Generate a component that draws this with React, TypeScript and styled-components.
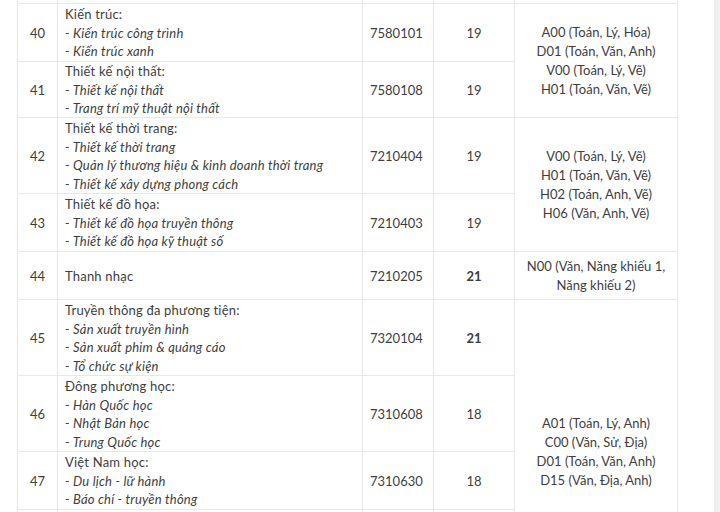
import styled, { createGlobalStyle } from 'styled-components';

const GlobalStyle = createGlobalStyle`
  html, body {
    margin: 0;
    padding: 0;
    background: #ffffff;
  }
  body {
    font-family: Lato, "Open Sans", sans-serif;
    color: #3e3e3e;
    overflow: hidden;
  }
`;

const Page = styled.div`
  display: flex;
  height: 512px;
  overflow: hidden;
`;

const Content = styled.div`
  flex: 1;
  padding-left: 17px;
`;

const ScrollTrack = styled.div`
  width: 6px;
  background: #efefef;
`;

const Grid = styled.div<{ $rows: string }>`
  display: grid;
  box-sizing: border-box;
  width: 661px;
  grid-template-columns: 40px 305px 71px 81px 163px;
  grid-template-rows: ${(p) => p.$rows};
  border-left: 1px solid #e8e8e8;
`;

const Cell = styled.div<{ $align?: 'left' | 'center'; $span?: number; $bold?: boolean }>`
  box-sizing: border-box;
  display: flex;
  flex-direction: column;
  justify-content: center;
  align-items: ${(p) => (p.$align === 'left' ? 'flex-start' : 'center')};
  text-align: ${(p) => p.$align ?? 'center'};
  padding: 1px 7px 0;
  grid-row: span ${(p) => p.$span ?? 1};
  border-right: 1px solid #e8e8e8;
  border-bottom: 1px solid #e8e8e8;
  font-size: 13px;
  line-height: 18.5px;
  font-weight: ${(p) => (p.$bold ? 700 : 400)};
  overflow: hidden;
`;

const Title = styled.span`
  display: block;
  letter-spacing: 0.2px;
`;

const Sub = styled.span`
  display: block;
  font-style: italic;
  letter-spacing: 0.2px;
`;

const Combo = styled.span`
  display: block;
  line-height: 19px;
  white-space: nowrap;
`;

type Row = {
  no?: number;
  title?: string;
  subs?: string[];
  code?: string;
  score?: number;
  bold?: boolean;
  h: number;
  combo?: { span: number; lines: string[] };
};

const rows: Row[] = [
  { h: 4, combo: { span: 1, lines: [] } },
  {
    no: 40,
    title: 'Kiến trúc:',
    subs: ['Kiến trúc công trình', 'Kiến trúc xanh'],
    code: '7580101',
    score: 19,
    h: 58,
    combo: {
      span: 2,
      lines: ['A00 (Toán, Lý, Hóa)', 'D01 (Toán, Văn, Anh)', 'V00 (Toán, Lý, Vẽ)', 'H01 (Toán, Văn, Vẽ)'],
    },
  },
  {
    no: 41,
    title: 'Thiết kế nội thất:',
    subs: ['Thiết kế nội thất', 'Trang trí mỹ thuật nội thất'],
    code: '7580108',
    score: 19,
    h: 56,
  },
  {
    no: 42,
    title: 'Thiết kế thời trang:',
    subs: ['Thiết kế thời trang', 'Quản lý thương hiệu & kinh doanh thời trang', 'Thiết kế xây dựng phong cách'],
    code: '7210404',
    score: 19,
    h: 76,
    combo: {
      span: 2,
      lines: ['V00 (Toán, Lý, Vẽ)', 'H01 (Toán, Văn, Vẽ)', 'H02 (Toán, Anh, Vẽ)', 'H06 (Văn, Anh, Vẽ)'],
    },
  },
  {
    no: 43,
    title: 'Thiết kế đồ họa:',
    subs: ['Thiết kế đồ họa truyền thông', 'Thiết kế đồ họa kỹ thuật số'],
    code: '7210403',
    score: 19,
    h: 58,
  },
  {
    no: 44,
    title: 'Thanh nhạc',
    code: '7210205',
    score: 21,
    bold: true,
    h: 48,
    combo: { span: 1, lines: ['N00 (Văn, Năng khiếu 1,', 'Năng khiếu 2)'] },
  },
  {
    no: 45,
    title: 'Truyền thông đa phương tiện:',
    subs: ['Sản xuất truyền hình', 'Sản xuất phim & quảng cáo', 'Tổ chức sự kiện'],
    code: '7320104',
    score: 21,
    bold: true,
    h: 76,
    combo: {
      span: 4,
      lines: ['A01 (Toán, Lý, Anh)', 'C00 (Văn, Sử, Địa)', 'D01 (Toán, Văn, Anh)', 'D15 (Văn, Địa, Anh)'],
    },
  },
  {
    no: 46,
    title: 'Đông phương học:',
    subs: ['Hàn Quốc học', 'Nhật Bản học', 'Trung Quốc học'],
    code: '7310608',
    score: 18,
    h: 76,
  },
  {
    no: 47,
    title: 'Việt Nam học:',
    subs: ['Du lịch - lữ hành', 'Báo chí - truyền thông'],
    code: '7310630',
    score: 18,
    h: 58,
  },
  { h: 93 },
];

export default function App() {
  const template = rows.map((r) => `${r.h}px`).join(' ');
  return (
    <>
      <GlobalStyle />
      <Page>
        <Content>
          <Grid $rows={template}>
            {rows.map((r, i) => [
              <Cell key={`n${i}`}>{r.no}</Cell>,
              <Cell key={`t${i}`} $align="left">
                {r.title && <Title>{r.title}</Title>}
                {r.subs?.map((s) => (
                  <Sub key={s}>- {s}</Sub>
                ))}
              </Cell>,
              <Cell key={`c${i}`} $align="left">
                {r.code}
              </Cell>,
              <Cell key={`s${i}`} $bold={r.bold}>
                {r.score}
              </Cell>,
              r.combo && (
                <Cell key={`k${i}`} $span={r.combo.span}>
                  {r.combo.lines.map((l) => (
                    <Combo key={l}>{l}</Combo>
                  ))}
                </Cell>
              ),
            ])}
          </Grid>
        </Content>
        <ScrollTrack />
      </Page>
    </>
  );
}
